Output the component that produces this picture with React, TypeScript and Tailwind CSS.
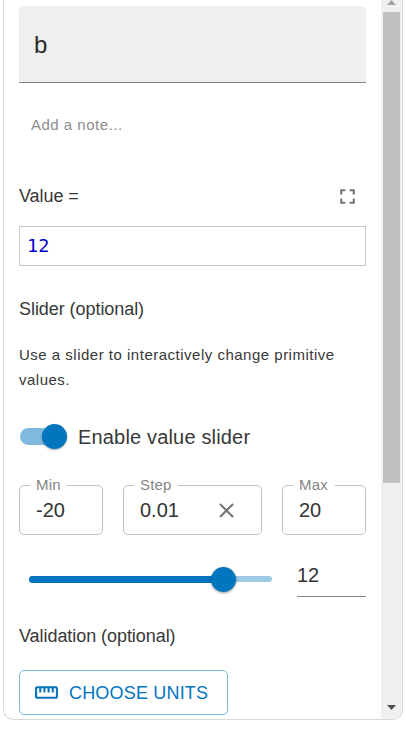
import React from "react";

function OutlinedField({ label, value, width, notch, onClear }: {
  label: string;
  value: string;
  width: string;
  notch: string;
  onClear?: boolean;
}) {
  return (
    <fieldset className={`relative h-[50px] rounded-[5px] border border-[#c0c0c0] ${width}`}>
      <span className={`absolute -top-px left-[10px] h-px bg-white ${notch}`} />
      <label className="absolute -top-[11px] left-[16px] text-[15px] leading-5 tracking-[0.15px] text-[#858585]">{label}</label>
      <div className="flex h-full items-center pl-[16px] text-[20px] leading-6 text-[#333]">
        {value}
        {onClear && (
          <svg className="ml-auto mr-[22px] mt-px h-[25px] w-[25px]" viewBox="0 0 24 24" fill="#757575">
            <path d="M19 6.41 17.59 5 12 10.59 6.41 5 5 6.41 10.59 12 5 17.59 6.41 19 12 13.41 17.59 19 19 17.59 13.41 12z" />
          </svg>
        )}
      </div>
    </fieldset>
  );
}

export default function App() {
  return (
    <div className="h-[729px] w-[406px] overflow-hidden bg-white pl-[3px] font-['Liberation_Sans',Arial,sans-serif] text-[#383838]">
      <div className="flex h-[720px] w-[400px] overflow-hidden rounded-b-[10px] border border-t-0 border-[#d8d8d8]">
        <main className="flex h-full w-[377px] shrink-0 flex-col pl-[15px] pr-[15px] pt-[6px]">
          <div className="flex h-[77px] shrink-0 items-center rounded-t-[5px] border-b border-[#858585] bg-[#efefef] pl-[15px] pt-px text-[24px] leading-8 text-[#2b2b2b]">b</div>
          <div className="mt-[32px] h-5 shrink-0 pl-3 text-[15px] leading-5 tracking-[0.5px] text-[#8c8c8c]">Add a note...</div>
          <div className="mt-[49px] flex h-6 shrink-0 items-center justify-between text-[18px] leading-6 tracking-[-0.06px]">
            <span>Value =</span>
            <svg className="mr-[6px] mt-px h-[25px] w-[25px]" viewBox="0 0 24 24" fill="#757575">
              <path d="M7 14H5v5h5v-2H7v-3zm-2-4h2V7h3V5H5v5zm12 7h-3v2h5v-5h-2v3zM14 5v2h3v3h2V5h-5z" />
            </svg>
          </div>
          <div className="mt-[18px] flex h-10 shrink-0 items-center border border-[#c9c9c9] pl-[7px] font-['DejaVu_Sans_Mono',monospace] text-[18.5px] leading-6 text-[#0000cd]">12</div>
          <h2 className="mt-[31px] h-6 shrink-0 text-[18px] leading-6 tracking-[-0.06px]">Slider (optional)</h2>
          <p className="mt-[21px] h-[50px] shrink-0 text-[15px] leading-[25px] tracking-[0.5px]">
            Use a slider to interactively change primitive<br />values.
          </p>
          <div className="mt-[32px] flex h-[25px] shrink-0 items-center text-[20px] leading-6 tracking-[0.17px]">
            <div className="ml-px flex h-[17px] w-[47px] items-center justify-end rounded-full bg-[#80b9de]">
              <span className="h-[25px] w-[25px] shrink-0 rounded-full bg-[#0275bf] shadow-[0_1px_2px_rgba(0,0,0,0.35)]" />
            </div>
            <span className="ml-[11px]">Enable value slider</span>
          </div>
          <div className="mt-[36px] flex shrink-0 justify-between">
            <OutlinedField label="Min" value="-20" width="w-[84px]" notch="w-[37px]" />
            <OutlinedField label="Step" value="0.01" width="w-[139px]" notch="w-[44px]" onClear />
            <OutlinedField label="Max" value="20" width="w-[84px]" notch="w-[42px]" />
          </div>
          <div className="mt-[28px] flex h-[34px] shrink-0">
            <div className="ml-[10px] mt-[13px] flex h-[6px] w-[243px] items-center rounded-full bg-[#9fcae6]">
              <span className="h-[7px] w-[194px] shrink-0 rounded-l-full bg-[#0275bf]" />
              <span className="-ml-[12px] h-[25px] w-[25px] shrink-0 rounded-full bg-[#0275bf] shadow-[0_1px_3px_rgba(0,0,0,0.4)]" />
            </div>
            <div className="ml-[25px] w-[69px] border-b border-[#858585] text-[20px] leading-[24px] text-[#333]">12</div>
          </div>
          <h2 className="mt-[27px] h-6 shrink-0 text-[18px] leading-6 tracking-[-0.06px]">Validation (optional)</h2>
          <button className="mt-[22px] flex h-[45px] w-[209px] shrink-0 items-center rounded-[5px] border border-[#80b9de] pl-[14px] text-[18px] leading-6 tracking-[0.18px] text-[#0275bf]">
            <svg className="h-[25px] w-[25px] shrink-0" viewBox="0 0 24 24" fill="currentColor">
              <path d="M21 6H3c-1.1 0-2 .9-2 2v8c0 1.1.9 2 2 2h18c1.1 0 2-.9 2-2V8c0-1.1-.9-2-2-2zm0 10H3V8h2v4h2V8h2v4h2V8h2v4h2V8h2v4h2V8h2v8z" />
            </svg>
            <span className="ml-[10px] whitespace-nowrap">CHOOSE UNITS</span>
          </button>
        </main>
        <aside className="flex h-full w-[21px] shrink-0 flex-col items-center bg-[#f0f0f0] pr-px">
          <svg className="h-3 w-[17px] shrink-0" viewBox="0 0 17 12" fill="#a3a3a3"><path d="M4 5 8.5 0 13 5z" /></svg>
          <div className="h-[471px] w-[17px] shrink-0 bg-[#c1c1c1]" />
          <svg className="mb-[9px] mt-auto h-[5px] w-[9px] shrink-0" viewBox="0 0 9 5" fill="#505050"><path d="M0 0h9L4.5 5z" /></svg>
        </aside>
      </div>
    </div>
  );
}
